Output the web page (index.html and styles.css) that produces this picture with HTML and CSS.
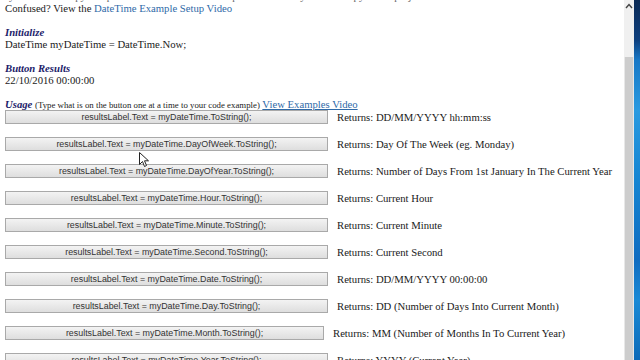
FILE: index.html
```html
<!DOCTYPE html>
<html>
<head>
<meta charset="utf-8">
<link rel="stylesheet" href="styles.css">
</head>
<body>
<div class="screen">
  <div class="page">
    <div class="content">
      <p class="line cut">you can also copy and paste the code from the examples below into your own copy of the project</p>
      <p class="line">Confused? View the <a class="link" href="#">DateTime Example Setup Video</a></p>
      <div class="block">
        <h3 class="head">Initialize</h3>
        <p class="line">DateTime myDateTime = DateTime.Now;</p>
      </div>
      <div class="block">
        <h3 class="head">Button Results</h3>
        <p class="line">22/10/2016 00:00:00</p>
      </div>
      <div class="block usage">
        <p class="line"><span class="head inline">Usage</span> <span class="note">(Type what is on the button one at a time to your code example)</span> <a class="link ul" href="#">View Examples Video</a></p>
      </div>
      <div class="rows">
        <div class="row"><button class="btn">resultsLabel.Text = myDateTime.ToString();</button><span class="ret">Returns: DD/MM/YYYY hh:mm:ss</span></div>
        <div class="row"><button class="btn">resultsLabel.Text = myDateTime.DayOfWeek.ToString();</button><span class="ret">Returns: Day Of The Week (eg. Monday)</span></div>
        <div class="row"><button class="btn">resultsLabel.Text = myDateTime.DayOfYear.ToString();</button><span class="ret">Returns: Number of Days From 1st January In The Current Year</span></div>
        <div class="row"><button class="btn">resultsLabel.Text = myDateTime.Hour.ToString();</button><span class="ret">Returns: Current Hour</span></div>
        <div class="row"><button class="btn">resultsLabel.Text = myDateTime.Minute.ToString();</button><span class="ret">Returns: Current Minute</span></div>
        <div class="row"><button class="btn">resultsLabel.Text = myDateTime.Second.ToString();</button><span class="ret">Returns: Current Second</span></div>
        <div class="row"><button class="btn">resultsLabel.Text = myDateTime.Date.ToString();</button><span class="ret">Returns: DD/MM/YYYY 00:00:00</span></div>
        <div class="row"><button class="btn">resultsLabel.Text = myDateTime.Day.ToString();</button><span class="ret">Returns: DD (Number of Days Into Current Month)</span></div>
        <div class="row"><button class="btn narrow">resultsLabel.Text = myDateTime.Month.ToString();</button><span class="ret">Returns: MM (Number of Months In To Current Year)</span></div>
        <div class="row"><button class="btn">resultsLabel.Text = myDateTime.Year.ToString();</button><span class="ret">Returns: YYYY (Current Year)</span></div>
      </div>
    </div>
    <svg class="cursor" width="10" height="16" viewBox="0 0 10 16"><path d="M0.5 0.5 L0.5 12.5 L3.5 9.5 L5.5 14.5 L7.5 13.5 L5.5 8.8 L9.5 8.8 Z" fill="#fff" stroke="#222" stroke-width="1"/></svg>
  </div>
  <div class="scrollbar">
    <div class="sb-track"><svg class="sb-arrow" width="8" height="6" viewBox="0 0 8 6"><path d="M1 5 L4 1.5 L7 5" fill="none" stroke="#444" stroke-width="1.4"/></svg></div>
    <div class="sb-thumb"></div>
  </div>
  <div class="desktop"></div>
</div>
</body>
</html>
```
FILE: styles.css
```css
html, body {
  margin: 0;
  padding: 0;
  background: #fff;
}
.screen {
  display: flex;
  width: 640px;
  height: 360px;
  overflow: hidden;
}
.page {
  position: relative;
  flex: 1;
  overflow: hidden;
  background: #fff;
}
.content {
  margin-top: -10px;
  padding-left: 5px;
  font-family: "Liberation Serif", "Times New Roman", serif;
  font-size: 10.7px;
  line-height: 12px;
  color: #1a1a1a;
}
.line {
  margin: 0;
  white-space: nowrap;
}
.cut {
  color: #666;
  padding-left: 4px;
}
.block {
  margin-top: 12px;
}
.head {
  margin: 0;
  font-size: 10.7px;
  font-weight: bold;
  font-style: italic;
  color: #1c1c6a;
  line-height: 12px;
}
.link {
  color: #2f6aa8;
  text-decoration: none;
}
.link.ul {
  text-decoration: underline;
}
.note {
  font-size: 8.8px;
}
.rows {
  display: flex;
  flex-direction: column;
  margin-top: -8px;
}
.row {
  display: flex;
  align-items: center;
  height: 27px;
}
.btn {
  flex-shrink: 0;
  width: 323px;
  height: 14px;
  padding: 0;
  border: 1px solid #a9a9a9;
  border-radius: 0;
  background: linear-gradient(#f3f3f3, #dedede);
  font-family: "Liberation Sans", Arial, sans-serif;
  font-size: 8.9px;
  color: #333;
  line-height: 12px;
  text-align: center;
  white-space: nowrap;
}
.btn.narrow {
  width: 319px;
}
.ret {
  margin-left: 9px;
  white-space: nowrap;
}
.cursor {
  position: absolute;
  left: 139px;
  top: 152px;
}
.scrollbar {
  width: 10px;
  display: flex;
  flex-direction: column;
  background: #e8e8e8;
}
.sb-track {
  height: 57px;
  background: #f0f0f0;
  display: flex;
  justify-content: center;
  padding-top: 3px;
  box-sizing: border-box;
}
.sb-thumb {
  flex: 1;
  background: #cdcdcd;
  margin: 0 1px;
}
.desktop {
  width: 6px;
  background: linear-gradient(#0b2a55 0px, #0d3f7e 40px, #1878c6 60px, #2a9ae0 110px, #1585d2 180px, #0f6cc0 260px, #1a8ad6 300px, #0c6ab8 360px);
}
```
